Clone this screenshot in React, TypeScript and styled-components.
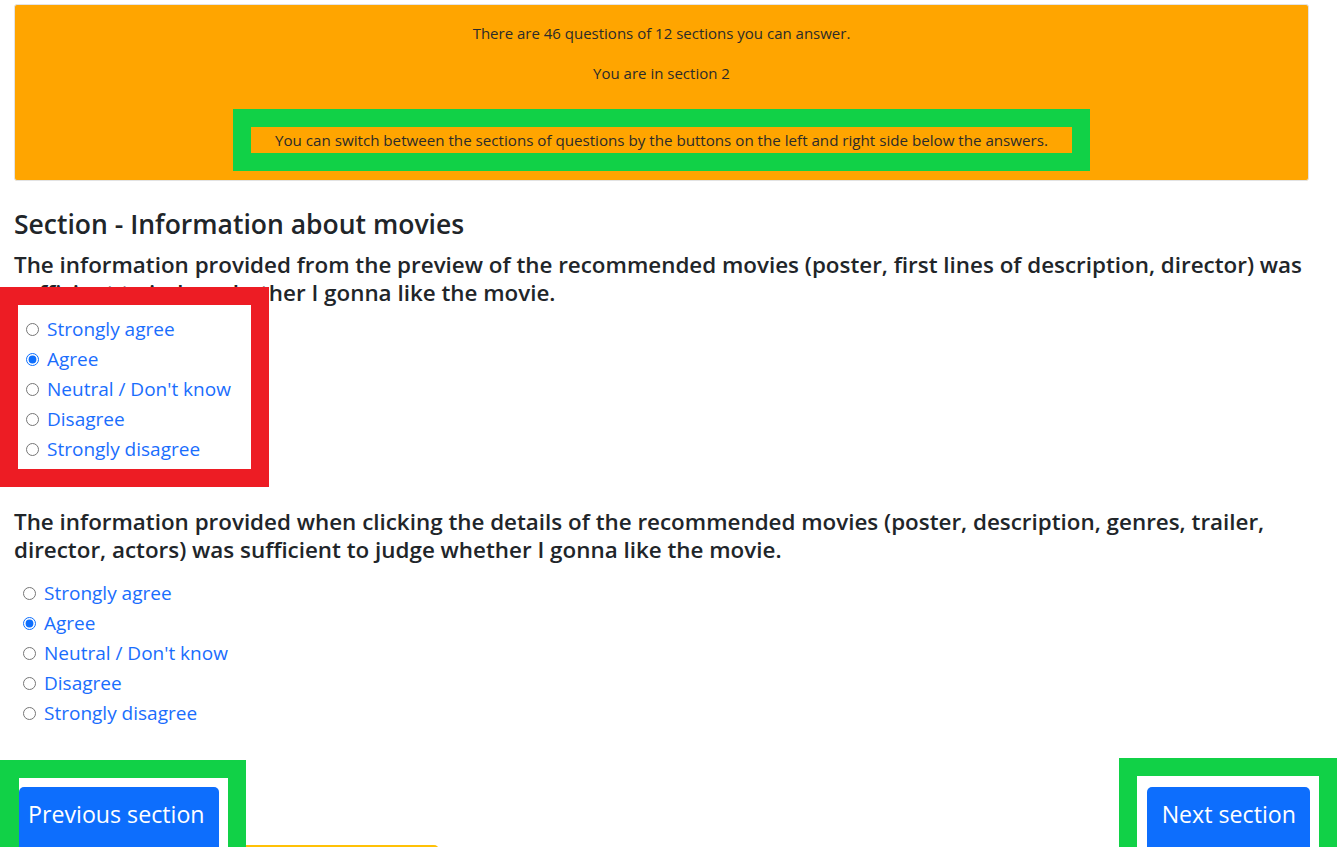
import * as React from 'react';
import styled, { createGlobalStyle } from 'styled-components';

const GlobalStyle = createGlobalStyle`
    body {
        margin: 0;
        background: #ffffff;
        color: #212529;
        font-family: "Open Sans", "Noto Sans", sans-serif;
    }
`;

const Page = styled.main`
    padding: 4px 32px 0 14px;
    overflow: hidden;
`;

const InfoBanner = styled.section`
    background: #ffa500;
    border: 1px solid #e3e3e3;
    border-radius: 3px;
    padding: 16px 0 9px;
    text-align: center;
    font-size: 15px;
    line-height: 24px;
    color: #2b2b2b;
`;

const BannerLine = styled.p`
    margin: 0 0 16px;
`;

const HintFrame = styled.div`
    display: inline-block;
    margin-top: 8px;
    border: 18px solid #11d147;
`;

const HintText = styled.p`
    margin: 0;
    padding: 0 24px;
    background: #ffa500;
    font-size: 15.15px;
    line-height: 26px;
`;

const SectionTitle = styled.h4`
    margin: 29px 0 12px;
    font-size: 26.5px;
    font-weight: 600;
    line-height: 29px;
    color: #212529;
`;

const Question = styled.h5<{ $gap?: number }>`
    margin: ${(p) => p.$gap ?? 0}px 0 0;
    font-size: 22.4px;
    font-weight: 600;
    line-height: 28px;
    color: #212529;
`;

const HighlightFrame = styled.div`
    position: relative;
    box-sizing: border-box;
    width: 269px;
    margin: -20px 0 0 -14px;
    border: 18px solid #ed1c24;
    background: #ffffff;
    padding: 9px 0 5px 8px;
`;

const OptionList = styled.div<{ $inset?: number; $top?: number }>`
    display: flex;
    flex-direction: column;
    margin: ${(p) => p.$top ?? 0}px 0 0 ${(p) => p.$inset ?? 0}px;
`;

const OptionRow = styled.label`
    display: flex;
    align-items: center;
    gap: 8px;
    height: 30px;
    font-size: 19px;
    color: #1a6dfd;
    cursor: pointer;
`;

const Radio = styled.input`
    width: 13px;
    height: 13px;
    margin: 0;
    accent-color: #0d6efd;
`;

const ButtonRow = styled.div`
    display: flex;
    justify-content: space-between;
    align-items: flex-start;
    margin: 30px -28px 0 -14px;
`;

const LeftGroup = styled.div`
    display: flex;
    align-items: flex-start;
`;

const ButtonFrame = styled.div<{ $top: number; $left: number; $right: number; $pad: number }>`
    margin-top: ${(p) => p.$top}px;
    border: 18px solid #11d147;
    border-left-width: ${(p) => (p.$left === 0 ? 19 : 18)}px;
    background: #ffffff;
    padding: ${(p) => p.$pad}px ${(p) => p.$right}px 0 ${(p) => p.$left}px;
`;

const NavButton = styled.button<{ $padLeft: number }>`
    display: block;
    padding: 10px 14px 22px ${(p) => p.$padLeft}px;
    border: none;
    border-radius: 5px 5px 0 0;
    background: #0d6efd;
    color: #ffffff;
    font-family: "Open Sans", "Noto Sans", sans-serif;
    font-size: 23.2px;
    line-height: 34px;
    text-align: left;
    cursor: pointer;
    white-space: nowrap;
`;

const WarningStub = styled.div`
    width: 193px;
    height: 30px;
    margin-top: 87px;
    background: #ffc107;
    border-radius: 0 5px 0 0;
`;

const options = ['Strongly agree', 'Agree', "Neutral / Don't know", 'Disagree', 'Strongly disagree'];

const Options: React.FunctionComponent<{ name: string; inset?: number; top?: number }> = ({ name, inset, top }) => (
    <OptionList $inset={inset} $top={top}>
        {options.map((o, i) => (
            <OptionRow key={o}>
                <Radio type="radio" name={name} defaultChecked={i === 1} />
                {o}
            </OptionRow>
        ))}
    </OptionList>
);

const App: React.FunctionComponent = () => {
    return (
        <>
            <GlobalStyle />
            <Page>
                <InfoBanner>
                    <BannerLine>There are 46 questions of 12 sections you can answer.</BannerLine>
                    <BannerLine>You are in section 2</BannerLine>
                    <HintFrame>
                        <HintText>
                            You can switch between the sections of questions by the buttons on the left and right side below the answers.
                        </HintText>
                    </HintFrame>
                </InfoBanner>

                <SectionTitle>Section - Information about movies</SectionTitle>
                <Question>
                    The information provided from the preview of the recommended movies (poster, first lines of description, director) was sufficient to judge whether I gonna like the movie.
                </Question>
                <HighlightFrame>
                    <Options name="q1" />
                </HighlightFrame>

                <Question $gap={21}>
                    The information provided when clicking the details of the recommended movies (poster, description, genres, trailer, director, actors) was sufficient to judge whether I gonna like the movie.
                </Question>
                <Options name="q2" inset={9} top={14} />

                <ButtonRow>
                    <LeftGroup>
                        <ButtonFrame $top={2} $left={0} $right={9} $pad={9}>
                            <NavButton $padLeft={9}>Previous section</NavButton>
                        </ButtonFrame>
                        <WarningStub />
                    </LeftGroup>
                    <ButtonFrame $top={0} $left={10} $right={9} $pad={11}>
                        <NavButton $padLeft={15}>Next section</NavButton>
                    </ButtonFrame>
                </ButtonRow>
            </Page>
        </>
    );
};

export default App;
